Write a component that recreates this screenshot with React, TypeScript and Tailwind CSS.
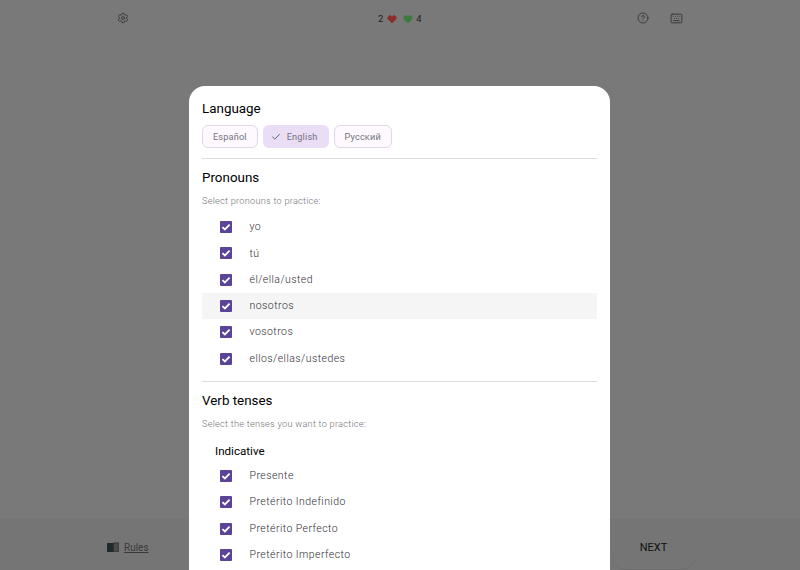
import React from 'react';
import { Settings, CircleHelp, Keyboard, Heart, Check } from 'lucide-react';

const pronouns = ['yo', 'tú', 'él/ella/usted', 'nosotros', 'vosotros', 'ellos/ellas/ustedes'];
const tenses = ['Presente', 'Pretérito Indefinido', 'Pretérito Perfecto', 'Pretérito Imperfecto'];

const CheckRow: React.FC<{ label: string; hover?: boolean }> = ({ label, hover }) => (
  <div className={`flex h-[26.3px] shrink-0 items-center ${hover ? 'bg-[#f5f5f5]' : ''}`}>
    <div className="ml-[18px] flex h-[12px] w-[12px] items-center justify-center rounded-[1px] bg-[#5b4397]">
      <svg viewBox="0 0 12 12" className="h-[12px] w-[12px]" fill="none" stroke="white" strokeWidth="1.8">
        <path d="M2.4 6.1l2.5 2.4 4.7-4.8" />
      </svg>
    </div>
    <span className="ml-[17.5px] text-[10.5px] font-light tracking-[0.45px] text-[#2f2d35]">{label}</span>
  </div>
);

const Chip: React.FC<{ label: string; selected?: boolean }> = ({ label, selected }) => (
  <div
    className={`flex h-[23px] items-center rounded-[6px] text-[9.2px] tracking-[0.15px] text-[#77727c] ${
      selected ? 'bg-[#e9def6] pl-[8px] pr-[11px]' : 'border border-[#e3d6e6] bg-[#fdf9fe] px-[10px]'
    }`}
  >
    {selected && <Check className="mr-[6px] h-[10px] w-[10px] text-[#4a4850]" strokeWidth={2} />}
    {label}
  </div>
);

const App: React.FC = () => {
  return (
    <div className="relative flex h-[570px] w-[800px] flex-col overflow-hidden bg-[#797979] font-['Roboto',sans-serif]">
      <header className="relative flex h-[36px] shrink-0 items-center justify-between pl-[117px] pr-[117px] text-[#272727]">
        <Settings className="h-[12px] w-[12px]" strokeWidth={1.4} />
        <div className="absolute left-[378px] top-[12px] flex items-center gap-[3px] text-[9.5px] text-[#1f1f1f]">
          <span className="mr-[1px]">2</span>
          <Heart className="h-[10px] w-[10px] fill-[#8a2f2b] text-[#8a2f2b]" />
          <Heart className="ml-[3px] h-[10px] w-[10px] fill-[#3d7a3e] text-[#3d7a3e]" />
          <span>4</span>
        </div>
        <div className="flex items-center gap-[21px]">
          <CircleHelp className="h-[12px] w-[12px]" strokeWidth={1.4} />
          <Keyboard className="h-[13px] w-[13px]" strokeWidth={1.4} />
        </div>
      </header>
      <div className="flex-1" />
      <footer className="flex h-[51px] shrink-0 items-center justify-between bg-[#757575] pl-[107px] pr-[105px]">
        <div className="flex items-center gap-[5px] pt-[5px] text-[10px] text-[#3a3a3a]">
          <svg viewBox="0 0 12 10" className="h-[10px] w-[12px]">
            <path d="M0 1h6v9H0z" fill="#1f2a2a" />
            <path d="M6.5 1H12v9H6.5z" fill="#4a4a4a" stroke="#333" strokeWidth="1" />
          </svg>
          <span className="underline">Rules</span>
        </div>
        <div className="flex h-[42px] w-[83px] translate-y-[4px] items-center justify-center rounded-b-[14px] border-b border-[#6d6d6d] text-[11px] text-[#111]">
          NEXT
        </div>
      </footer>

      <div className="absolute left-[189px] top-[86px] flex h-[484px] w-[421px] flex-col overflow-hidden rounded-t-[16px] bg-white px-[13px] text-black">
        <h2 className="mt-[14px] text-[13.4px] leading-[17px]">Language</h2>
        <div className="mt-[8px] flex gap-[5px]">
          <Chip label="Español" />
          <Chip label="English" selected />
          <Chip label="Русский" />
        </div>
        <div className="mt-[10px] h-px shrink-0 bg-[#ddd9de]" />
        <h2 className="mt-[10px] text-[13.4px] leading-[17px]">Pronouns</h2>
        <p className="mt-[9px] text-[9.2px] font-light leading-[12px] tracking-[0.25px] text-[#77737a]">Select pronouns to practice:</p>
        <div className="mt-[7px] flex flex-col">
          {pronouns.map((p) => (
            <CheckRow key={p} label={p} hover={p === 'nosotros'} />
          ))}
        </div>
        <div className="mt-[9px] h-px shrink-0 bg-[#ddd9de]" />
        <h2 className="mt-[10px] text-[13.4px] leading-[17px]">Verb tenses</h2>
        <p className="mt-[9px] text-[9.2px] font-light leading-[12px] tracking-[0.25px] text-[#77737a]">Select the tenses you want to practice:</p>
        <h3 className="ml-[13px] mt-[14px] text-[11.6px] leading-[15px]">Indicative</h3>
        <div className="mt-[4px] flex flex-col">
          {tenses.map((t) => (
            <CheckRow key={t} label={t} />
          ))}
        </div>
      </div>
    </div>
  );
};

export default App;
